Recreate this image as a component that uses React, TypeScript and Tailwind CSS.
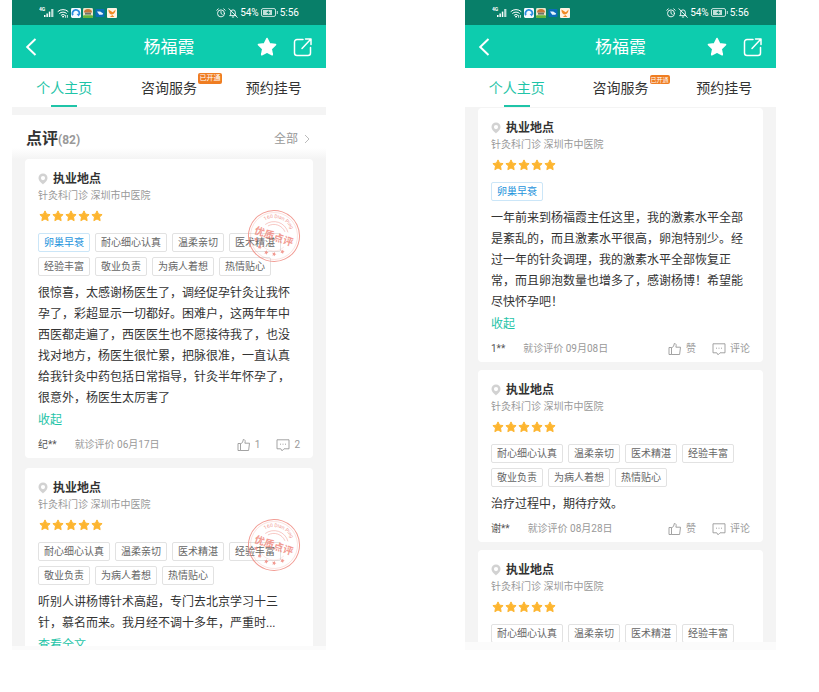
import type { ReactNode } from "react";

type Tag = { label: string; highlight?: boolean };

type Visit = { author: string; date: string; likes: string; comments: string };

type Review = {
  id: string;
  tags: Tag[];
  text?: string;
  toggle?: string;
  visit?: Visit;
  featured?: boolean;
};

const common: Tag[] = ["耐心细心认真", "温柔亲切", "医术精湛", "经验丰富", "敬业负责", "为病人着想", "热情贴心"].map(
  (label) => ({ label }),
);

const disease: Tag = { label: "卵巢早衰", highlight: true };

const overviewReviews: Review[] = [
  {
    id: "a1",
    tags: [disease, ...common],
    text: "很惊喜，太感谢杨医生了，调经促孕针灸让我怀孕了，彩超显示一切都好。困难户，这两年年中西医都走遍了，西医医生也不愿接待我了，也没找对地方，杨医生很忙累，把脉很准，一直认真给我针灸中药包括日常指导，针灸半年怀孕了，很意外，杨医生太厉害了",
    toggle: "收起",
    visit: { author: "纪**", date: "06月17日", likes: "1", comments: "2" },
    featured: true,
  },
  {
    id: "a2",
    tags: common,
    text: "听别人讲杨博针术高超，专门去北京学习十三针，慕名而来。我月经不调十多年，严重时...",
    toggle: "查看全文",
    featured: true,
  },
];

const moreReviews: Review[] = [
  {
    id: "b1",
    tags: [disease],
    text: "一年前来到杨福霞主任这里，我的激素水平全部是紊乱的，而且激素水平很高，卵泡特别少。经过一年的针灸调理，我的激素水平全部恢复正常，而且卵泡数量也增多了，感谢杨博！希望能尽快怀孕吧！",
    toggle: "收起",
    visit: { author: "1**", date: "09月08日", likes: "赞", comments: "评论" },
  },
  {
    id: "b2",
    tags: common,
    text: "治疗过程中，期待疗效。",
    visit: { author: "谢**", date: "08月28日", likes: "赞", comments: "评论" },
  },
  {
    id: "b3",
    tags: common.slice(0, 4),
  },
];

const STAR = "M12 1.8l3.1 6.5 7.1.9-5.2 5 1.3 7.1L12 17.9l-6.3 3.4L7 14.2l-5.2-5 7.1-.9z";

function Star({ className }: { className: string }) {
  return (
    <svg viewBox="0 0 24 24" className={className} fill="currentColor" stroke="currentColor" strokeWidth="2" strokeLinejoin="round">
      <path d={STAR} />
    </svg>
  );
}

function StatusBar() {
  return (
    <div className="flex h-[25px] shrink-0 items-center justify-between bg-[#087f69] px-[27px] text-white">
      <div className="flex items-center gap-[2px]">
        <svg viewBox="0 0 16 11" className="h-[11px] w-4" fill="currentColor">
          <text x="0" y="4" fontSize="5" fontWeight="700">4G</text>
          <rect x="5" y="8" width="1.5" height="2" />
          <rect x="7.4" y="6.5" width="1.5" height="3.5" />
          <rect x="9.8" y="4.6" width="1.5" height="5.4" />
          <rect x="12.2" y="2" width="2.2" height="8" opacity=".75" />
        </svg>
        <svg viewBox="0 0 12 10" className="h-[10px] w-3" fill="none" stroke="currentColor" strokeWidth="1" strokeLinecap="round">
          <path d="M1 3.4a7.4 7.4 0 0 1 10 0M2.6 5.3a5 5 0 0 1 6.8 0M4.2 7.1a2.7 2.7 0 0 1 3.6 0" />
          <path d="M8.6 7.4v2M10.4 9.4v-2" strokeWidth=".8" />
          <circle cx="6" cy="8.7" r=".5" fill="currentColor" />
        </svg>
        <svg viewBox="0 0 10 10" className="h-[10px] w-[10px]">
          <rect width="10" height="10" rx="1.4" fill="#f4faff" />
          <path d="M1.9 7.2A3.5 3.5 0 1 1 8.3 6.4" fill="none" stroke="#2b8be0" strokeWidth="1.8" />
          <path d="M5.6 6l3.6-.4-1.4 3z" fill="#2b8be0" />
        </svg>
        <svg viewBox="0 0 10 10" className="h-[10px] w-[10px]">
          <rect width="10" height="10" rx="1.4" fill="#e8e3c8" />
          <path d="M1 4.6A4 3.6 0 0 1 9 4.6z" fill="#c9763a" />
          <rect x="2" y="4.6" width="6" height="2" fill="#6d7466" />
          <rect y="7.2" width="10" height="2.8" rx="1" fill="#65b53b" />
        </svg>
        <svg viewBox="0 0 10 10" className="h-[10px] w-[10px]">
          <rect x=".5" y="1" width="9" height="8" rx="1" fill="#0b6db7" />
          <path d="M2 3.4h3.2l3 2.2-.8 1.2H4.2z" fill="#e7f5ff" />
        </svg>
        <svg viewBox="0 0 10 10" className="h-[10px] w-[10px]">
          <rect width="10" height="10" rx="1" fill="#fff3e2" />
          <path d="M1.4 1.4C1.4 4.6 3 6.4 5 6.4S8.4 4 8.6 1.4L5.8 4.2zM2.8 9h4.6L5.4 7z" fill="#ef8a24" />
        </svg>
      </div>
      <div className="flex items-center gap-[2px] text-[10px] leading-3">
        <svg viewBox="0 0 10 10" className="h-[10px] w-[10px]" fill="none" stroke="currentColor" strokeWidth=".9" strokeLinecap="round">
          <circle cx="5" cy="5.4" r="3.5" />
          <path d="M5 3.5v2l1.2.8M.8 2.2 2.3.9M9.2 2.2 7.7.9" />
        </svg>
        <svg viewBox="0 0 10 10" className="h-[10px] w-[10px]" fill="none" stroke="currentColor" strokeWidth=".9" strokeLinecap="round">
          <path d="M2 7.6h6L7.3 6.500V4.200a2.300 2.300 0 0 0-4.600 0v2.300zM4.300 9h1.400M1 .8l8.300 8.600" />
        </svg>
        <span>54%</span>
        <svg viewBox="0 0 17 9" className="h-[9px] w-[17px]" fill="none" stroke="currentColor" strokeWidth=".8">
          <rect x=".5" y=".6" width="14" height="7.8" rx="1.5" />
          <rect x="2" y="2" width="9" height="5" fill="currentColor" stroke="none" opacity=".75" />
          <path d="M16.300 3v3" />
          <path d="M8 2.200 5.200 5h2l-.6 1.800L9.400 4.200H7.600z" fill="#087f69" stroke="none" />
        </svg>
        <span>5:56</span>
      </div>
    </div>
  );
}

function Header() {
  return (
    <header className="grid h-[43px] shrink-0 grid-cols-[1fr_auto_1fr] items-center bg-[#0dccae] px-[13px] text-white">
      <button type="button" aria-label="返回">
        <svg viewBox="0 0 12 18" className="h-[18px] w-3" fill="none" stroke="currentColor" strokeWidth="2">
          <path d="M10.500 1 2.200 9l8.300 8" />
        </svg>
      </button>
      <h1 className="text-[17px] leading-6">杨福霞</h1>
      <div className="flex items-center justify-end gap-4">
        <button type="button" aria-label="收藏">
          <Star className="h-5 w-5" />
        </button>
        <button type="button" aria-label="分享">
          <svg viewBox="0 0 20 20" className="h-5 w-5" fill="none" stroke="currentColor" strokeWidth="1.500" strokeLinecap="round" strokeLinejoin="round">
            <path d="M10 2.500H4A2.500 2.500 0 0 0 1.500 5v11A2.500 2.500 0 0 0 4 18.500h11a2.500 2.500 0 0 0 2.500-2.500v-5.500M12.500 2H18v5.500M17.700 2.300 9 11.500" />
          </svg>
        </button>
      </div>
    </header>
  );
}

function Tabs({ badgeClass }: { badgeClass: string }) {
  return (
    <nav className="flex h-[39px] shrink-0 bg-white text-sm leading-10 text-[#333]">
      <a href="#home" className="relative flex-1 text-center text-[#1fc4a8]">
        个人主页
        <span className="absolute bottom-0 left-1/2 h-[2px] w-[26px] -translate-x-1/2 bg-[#1fc4a8]" />
      </a>
      <a href="#consult" className="flex-1 text-center">
        <span className="relative inline-block">
          咨询服务
          <span className={`absolute left-full ml-px rounded-[2px] bg-[#ef7d22] text-center text-white ${badgeClass}`}>已开通</span>
        </span>
      </a>
      <a href="#register" className="flex-1 text-center">
        预约挂号
      </a>
    </nav>
  );
}

function Stamp({ id }: { id: string }) {
  return (
    <svg viewBox="0 0 54 54" className="absolute right-3 top-[50px] h-[54px] w-[54px] text-[#f08a80]" fill="none" stroke="currentColor">
      <defs>
        <path id={id} d="M9 27a18 18 0 0 1 36 0" />
      </defs>
      <g transform="rotate(19 27 27)" opacity=".85">
        <circle cx="27" cy="27" r="25.500" strokeWidth="1" />
        <circle cx="27" cy="27" r="23.500" strokeWidth=".5" opacity=".5" />
        <path d="M15 19a14.500 14.500 0 0 1 24 0M18 19.500a12 12 0 0 1 18 0" strokeWidth=".6" opacity=".8" />
        <path d="M14 34a14.500 14.500 0 0 0 26 0" strokeWidth=".5" opacity=".4" />
        <g fill="currentColor" stroke="none">
          <text fontSize="5">
            <textPath href={`#${id}`} startOffset="50%" textAnchor="middle">160 Dian Ping</textPath>
          </text>
          <text x="27" y="31" fontSize="10" fontWeight="700" textAnchor="middle">优质点评</text>
          {[
            [11, 36],
            [17, 42],
            [25, 45],
            [33, 44],
            [40, 39],
          ].map(([x, y]) => (
            <path key={x} transform={`translate(${x - 2.5} ${y - 2.5}) scale(.21)`} d={STAR} />
          ))}
        </g>
      </g>
    </svg>
  );
}

function Action({ label, text, children }: { label: string; text: string; children: ReactNode }) {
  return (
    <button type="button" aria-label={label} className="flex items-center gap-1">
      <svg viewBox="0 0 14 13" className="h-[13px] w-[14px]" fill="none" stroke="currentColor" strokeWidth=".9" strokeLinejoin="round">
        {children}
      </svg>
      {text}
    </button>
  );
}

function VisitFooter({ visit }: { visit: Visit }) {
  return (
    <footer className="mt-[6px] flex items-center text-[10px] leading-4 text-[#999]">
      <span className="text-[#555]">{visit.author}</span>
      <span className="ml-[18px] flex-1">就诊评价 {visit.date}</span>
      <div className="flex gap-4">
        <Action label="点赞" text={visit.likes}>
          <path d="M1 4.500h2.500v7H1zM3.500 4.800C5.500 4.200 6 2.500 6.200.600c1.800-.3 2.400 1.200 1.700 3.600h4.600l-.9 7.300H3.500" />
        </Action>
        <Action label="评论" text={visit.comments}>
          <path d="M1 .8h12v9H8l-2 2-1.200-2H1z" />
          <path d="M4 5.200h1M6.500 5.200h1M9 5.200h1" />
        </Action>
      </div>
    </footer>
  );
}

function ReviewCard({ review }: { review: Review }) {
  return (
    <article className="relative shrink-0 rounded bg-white px-[13px] pb-[5px] pt-3">
      <h3 className="flex items-center gap-[5px] text-xs font-bold leading-4 text-[#333]">
        <svg viewBox="0 0 10 12" className="h-3 w-[10px] text-[#d2d2d2]" fill="currentColor" fillRule="evenodd">
          <path d="M5 .5a4.500 4.500 0 0 0-4.500 4.600C.5 8 3.500 10 5 11.500 6.500 10 9.500 8 9.500 5.100A4.500 4.500 0 0 0 5 .5zM5 3a2.100 2.100 0 1 1 0 4.200A2.100 2.100 0 0 1 5 3z" />
        </svg>
        执业地点
      </h3>
      <p className="mt-[1px] text-[10px] leading-4 text-[#999]">针灸科门诊 深圳市中医院</p>
      <div className="mt-[6px] flex gap-[1px] pl-[1px] text-[#fdb52f]" role="img" aria-label="5星">
        {[1, 2, 3, 4, 5].map((n) => (
          <Star key={n} className="h-3 w-3" />
        ))}
      </div>
      <ul className="mt-[11px] flex flex-wrap gap-[5px] text-[10px] leading-[17px]">
        {review.tags.map((tag) => (
          <li
            key={tag.label}
            className={
              tag.highlight
                ? "rounded-[2px] border border-[#cbe6f8] px-[5px] text-[#1d93dc]"
                : "rounded-[2px] border border-[#e2e2e2] px-[5px] text-[#666]"
            }
          >
            {tag.label}
          </li>
        ))}
      </ul>
      {review.text && <p className="mt-[7px] text-xs leading-[21px] text-[#333]">{review.text}</p>}
      {review.toggle && (
        <button type="button" className="mt-[1px] block text-xs leading-[21px] text-[#1fc4a8]">
          {review.toggle}
        </button>
      )}
      {review.visit && <VisitFooter visit={review.visit} />}
      {review.featured && <Stamp id={`arc-${review.id}`} />}
    </article>
  );
}

function SectionHead() {
  return (
    <div className="mt-2 flex h-11 shrink-0 items-center justify-between bg-linear-to-b from-white from-75% to-[#f4f4f4] pl-[14px] pr-4 pt-[3px]">
      <h2 className="text-base font-bold leading-6 text-[#333]">
        点评<span className="text-xs text-[#999]">(82)</span>
      </h2>
      <a href="#all" className="flex items-center gap-[6px] text-xs text-[#999]">
        全部
        <svg viewBox="0 0 6 10" className="h-[10px] w-[6px] text-[#bbb]" fill="none" stroke="currentColor">
          <path d="M1 1l4 4-4 4" />
        </svg>
      </a>
    </div>
  );
}

function Phone({ className, badgeClass, children }: { className: string; badgeClass: string; children: ReactNode }) {
  return (
    <section className={`flex min-h-0 flex-col bg-[#fbfbfb] ${className}`}>
      <StatusBar />
      <Header />
      <Tabs badgeClass={badgeClass} />
      <div className="flex min-h-0 flex-1 flex-col overflow-hidden bg-[#f4f4f4]">{children}</div>
    </section>
  );
}

export default function App() {
  return (
    <main className="grid h-screen grid-cols-[314fr_311fr] grid-rows-[minmax(0,1fr)] gap-[139px] bg-white pb-[42px] pl-3 pr-[43px] font-['Roboto','Noto_Sans_CJK_SC',sans-serif]">
      <Phone className="pb-1" badgeClass="top-[5px] h-[11px] w-6 text-[7px] leading-[11px]">
        <SectionHead />
        <div className="flex flex-col gap-[10px] px-[13px]">
          {overviewReviews.map((review) => (
            <ReviewCard key={review.id} review={review} />
          ))}
        </div>
      </Phone>
      <Phone className="pb-2" badgeClass="top-[7px] h-[9px] w-5 text-[6px] leading-[9px]">
        <div className="mt-[1px] flex flex-col gap-2 px-[13px]">
          {moreReviews.map((review) => (
            <ReviewCard key={review.id} review={review} />
          ))}
        </div>
      </Phone>
    </main>
  );
}
